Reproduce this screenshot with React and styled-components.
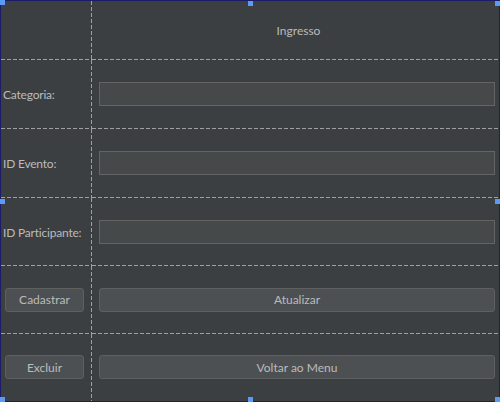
import React from 'react';
import styled, { createGlobalStyle } from 'styled-components';

const GlobalStyle = createGlobalStyle`
    html, body {
        margin: 0;
        padding: 0;
        background: #3c3f41;
    }
    body {
        font-family: Lato, "Noto Sans", sans-serif;
        font-size: 12px;
        color: #bbbbbb;
    }
`;

const dashH = `repeating-linear-gradient(to right, #a0a0a0 0 4px, transparent 4px 6px)`;
const dashV = `repeating-linear-gradient(to bottom, #a0a0a0 0 4px, transparent 4px 6px)`;

const Frame = styled.div`
    position: relative;
    box-sizing: border-box;
    width: 500px;
    height: 402px;
    border: 1px solid #1b1b66;
    background: #3c3f41;
    display: grid;
    grid-template-columns: 91px 1fr;
    grid-template-rows: 59px 69px 69px 68px 68px 1fr;
`;

const Cell = styled.div`
    display: flex;
    align-items: center;
    justify-content: ${p => (p.$center ? 'center' : 'flex-start')};
    padding: ${p => (p.$left ? '0 0 0 2px' : '0 4px 0 7px')};
    background-image: ${p => [p.$last ? null : dashH, p.$left ? dashV : null].filter(Boolean).join(', ') || 'none'};
    background-size: ${p => [p.$last ? null : '100% 1px', p.$left ? '1px 100%' : null].filter(Boolean).join(', ') || 'auto'};
    background-position: ${p => [p.$last ? null : 'left bottom', p.$left ? 'right top' : null].filter(Boolean).join(', ') || '0 0'};
    background-repeat: no-repeat;
    min-width: 0;
`;

const Title = styled.span`
    margin-left: 3px;
    margin-bottom: 1px;
`;

const Label = styled.span`
    white-space: nowrap;
    letter-spacing: -0.2px;
`;

const Field = styled.input`
    box-sizing: border-box;
    width: 100%;
    height: 24px;
    margin: 0 0 1px 0;
    background: #45494a;
    border: 1px solid #646464;
    color: #bbbbbb;
    font: inherit;
    outline: none;
    padding: 0 4px;
`;

const Button = styled.button`
    box-sizing: border-box;
    width: 100%;
    height: 24px;
    margin: ${p => (p.$side ? '0 8px 1px 2px' : '0 0 1px 0')};
    background: #4c5052;
    border: 1px solid #5e6060;
    border-radius: 3px;
    color: #bbbbbb;
    font: inherit;
    padding: 0;
    cursor: default;
`;

const Handle = styled.div`
    position: absolute;
    width: 5px;
    height: 5px;
    background: #5b9bf5;
    left: ${p => p.$x}px;
    top: ${p => p.$y}px;
`;

const handles = [
    [-1, -1], [247, 0], [494, 0],
    [-1, 198], [494, 198],
    [-1, 396], [247, 396], [494, 396],
];

export default function App() {
    return (
        <>
            <GlobalStyle />
            <Frame>
                <Cell $left />
                <Cell $center><Title>Ingresso</Title></Cell>

                <Cell $left><Label>Categoria:</Label></Cell>
                <Cell><Field /></Cell>

                <Cell $left><Label>ID Evento:</Label></Cell>
                <Cell><Field /></Cell>

                <Cell $left><Label>ID Participante:</Label></Cell>
                <Cell><Field /></Cell>

                <Cell $left><Button $side>Cadastrar</Button></Cell>
                <Cell><Button>Atualizar</Button></Cell>

                <Cell $left $last><Button $side>Excluir</Button></Cell>
                <Cell $last><Button>Voltar ao Menu</Button></Cell>

                {handles.map(([x, y], i) => (
                    <Handle key={i} $x={x} $y={y} />
                ))}
            </Frame>
        </>
    );
}
